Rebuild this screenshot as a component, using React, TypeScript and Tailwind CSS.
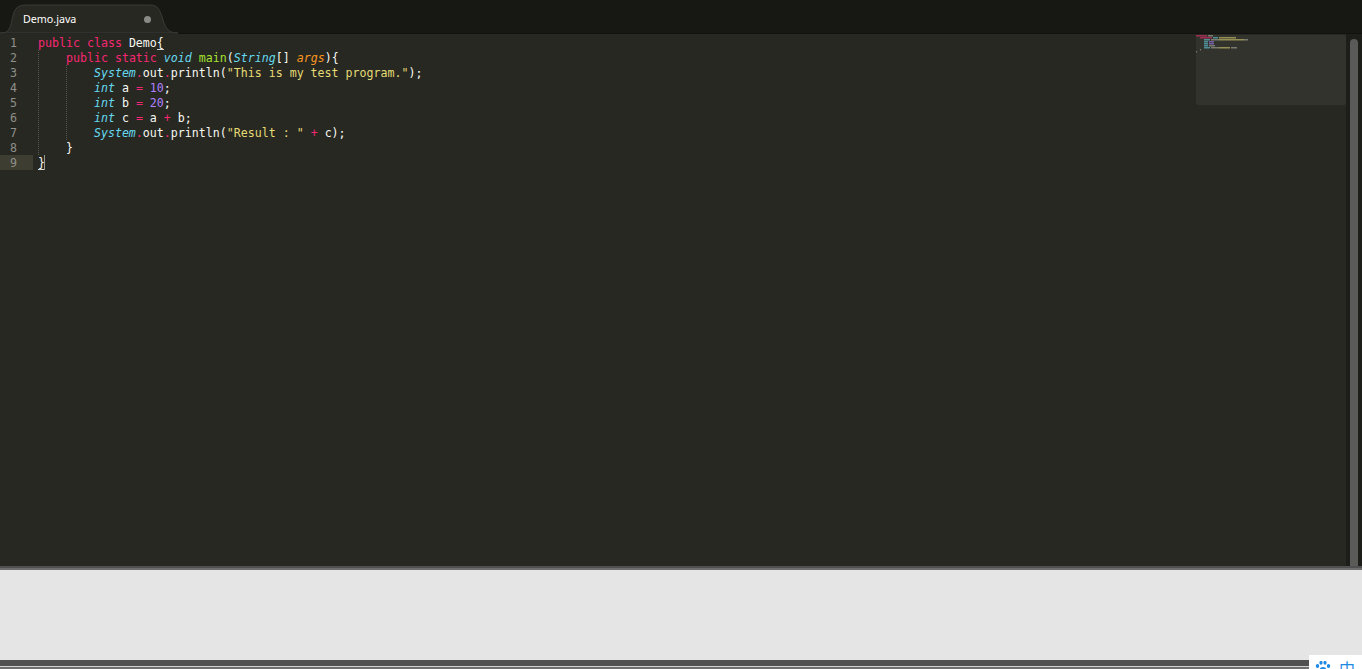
import React from "react";

type Seg = [string, string?];
const P = "text-[#f92672]", B = "text-[#66d9ef] italic", G = "text-[#a6e22e]", O = "text-[#fd971f] italic", N = "text-[#ae81ff]", S = "text-[#e6db74]";

const lines: Seg[][] = [
  [["public ", P], ["class ", P], ["Demo"], ["{"]],
  [["    "], ["public ", P], ["static ", P], ["void ", B], ["main", G], ["("], ["String", B], ["[] "], ["args", O], ["){"]],
  [["        "], ["System", B], [".", P], ["out"], [".", P], ["println("], ['"This is my test program."', S], [");"]],
  [["        "], ["int ", B], ["a "], ["= ", P], ["10", N], [";"]],
  [["        "], ["int ", B], ["b "], ["= ", P], ["20", N], [";"]],
  [["        "], ["int ", B], ["c "], ["= ", P], ["a "], ["+ ", P], ["b;"]],
  [["        "], ["System", B], [".", P], ["out"], [".", P], ["println("], ['"Result : "', S], [" "], ["+ ", P], ["c);"]],
  [["    "], ["}"]],
  [["}"]],
];

const mini: [number, number, number, string][] = [
  [0, 0, 11, "#f92672"], [12, 0, 5, "#b5b5a8"],
  [4, 2, 12, "#f92672"], [17, 2, 5, "#66d9ef"], [23, 2, 17, "#e6db74"],
  [8, 4, 6, "#66d9ef"], [15, 4, 8, "#b5b5a8"], [23, 4, 25, "#e6db74"], [48, 4, 4, "#b5b5a8"],
  [8, 6, 4, "#66d9ef"], [13, 6, 5, "#ae81ff"],
  [8, 8, 4, "#66d9ef"], [13, 8, 5, "#ae81ff"],
  [8, 10, 4, "#66d9ef"], [13, 10, 6, "#b5b5a8"],
  [8, 12, 6, "#66d9ef"], [15, 12, 8, "#b5b5a8"], [23, 12, 11, "#e6db74"], [35, 12, 6, "#b5b5a8"],
  [4, 14, 1, "#b5b5a8"], [0, 16, 1, "#b5b5a8"],
];

export default function App() {
  return (
    <div className="relative flex h-[669px] w-[1362px] flex-col overflow-hidden bg-[#e5e5e5]">
      {/* Tab strip */}
      <div className="relative flex h-[34px] shrink-0 items-end border-b border-[#111210] bg-[#171813] pl-[23px]">
        <svg className="absolute left-0 top-0" width="180" height="34" viewBox="0 0 180 34">
          <path d="M0 33 C8 33 10 30 12 20 C14 10 16 5 26 5 L150 5 C158 5 160 10 163 20 C166 30 170 33 178 33 Z" fill="#272822" stroke="#3a3b36" strokeWidth="1" />
        </svg>
        <span className="relative mb-[6px] text-[10.7px] leading-[15px] text-white [font-family:'Noto_Sans',sans-serif]">Demo.java</span>
        <span className="absolute left-[144px] top-[16px] h-[7px] w-[7px] rounded-full bg-[#8a8a86]" />
      </div>

      {/* Editor */}
      <div className="flex h-[532px] shrink-0 bg-[#272822]">
        <div className="relative flex flex-1 pt-[1px]">
          <div className="w-[33px] shrink-0">
            {lines.map((_, i) => (
              <div key={i} className={`h-[15px] pl-[10px] text-[11.62px] leading-[17px] text-[#8f908a] [font-family:'DejaVu_Sans_Mono',monospace] ${i === 8 ? "bg-[#3e3d32]" : ""}`}>
                {i + 1}
              </div>
            ))}
          </div>
          <div className="relative pl-[5px]">
            {lines.map((segs, i) => (
              <div key={i} className="h-[15px] whitespace-pre text-[11.62px] leading-[17px] text-[#f8f8f2] [font-family:'DejaVu_Sans_Mono',monospace]">
                {segs.map((s, j) => (
                  <span key={j} className={s[1] ?? ""}>{s[0]}</span>
                ))}
              </div>
            ))}
            {/* indent guides */}
            <div className="absolute left-[5px] top-[15px] h-[105px] border-l border-dotted border-[#55564f]" />
            <div className="absolute left-[33px] top-[30px] h-[75px] border-l border-dotted border-[#55564f]" />
            {/* bracket underlines */}
            <div className="absolute left-[124px] top-[14px] h-px w-[7px] bg-[#d8d8d2]" />
            <div className="absolute left-[5px] top-[134px] h-px w-[7px] bg-[#d8d8d2]" />
            {/* caret */}
            <div className="absolute left-[11px] top-[120px] h-[15px] w-px bg-[#9a9a94]" />
          </div>
          {/* minimap */}
          <div className="absolute left-[1196px] top-[1px] h-[70px] w-[150px] rounded-[2px] bg-[#32332d]">
            <svg width="60" height="20" viewBox="0 0 60 20" className="block">
              {mini.map(([x, y, w, c], i) => (
                <rect key={i} x={x} y={y} width={w} height="1.5" fill={c} opacity="0.55" />
              ))}
            </svg>
          </div>
        </div>
        {/* scrollbar */}
        <div className="flex w-[16px] shrink-0 justify-center bg-[#1d1e1a] pt-[5px]">
          <div className="h-full w-[8px] rounded-t-[4px] bg-[#5a5a58]" />
        </div>
      </div>

      {/* Panel edge */}
      <div className="h-[4px] shrink-0 border-t-2 border-[#505050] bg-[#6e6e6e]" />
      <div className="h-[90px] shrink-0 bg-[#e5e5e5]" />
      <div className="flex-1 bg-[#505050]">
        <div className="mt-[6px] h-px bg-[#d0d0d0]" />
        <div className="h-[2px] bg-[#6e6e6e]" />
      </div>

      {/* IME widget */}
      <div className="absolute left-[1309px] top-[655px] flex h-[14px] w-[53px] items-start gap-[8px] bg-white pl-[6px] pt-[6px]">
        <svg width="16" height="13" viewBox="0 0 16 13" fill="#1e88e5" className="shrink-0">
          <ellipse cx="2.5" cy="5" rx="1.7" ry="2" />
          <ellipse cx="6" cy="1.8" rx="1.6" ry="1.9" />
          <ellipse cx="10" cy="1.8" rx="1.6" ry="1.9" />
          <ellipse cx="13.5" cy="5" rx="1.7" ry="2" />
          <ellipse cx="8" cy="8.5" rx="3.2" ry="2.4" />
        </svg>
        <span className="-mt-[1px] text-[16px] leading-[16px] text-[#1e88e5] [font-family:'Noto_Sans_CJK_SC',sans-serif]">中</span>
      </div>
    </div>
  );
}
